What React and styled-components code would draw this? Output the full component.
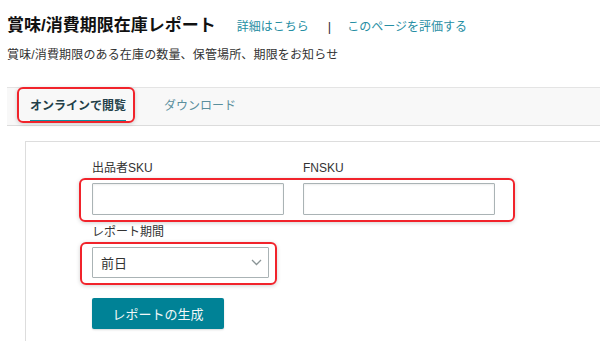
import React from "react";
import styled, { createGlobalStyle } from "styled-components";

const Global = createGlobalStyle`
  html, body { margin: 0; padding: 0; background: #fff; }
  body {
    font-family: "Liberation Sans", "Noto Sans CJK JP", sans-serif;
    color: #333;
    -webkit-font-smoothing: antialiased;
  }
  * { box-sizing: border-box; }
`;

const Page = styled.div`
  width: 600px;
  height: 341px;
  overflow: hidden;
  padding: 14px 0 0 7px;
`;

const Header = styled.div`
  display: flex;
  align-items: baseline;
  height: 24px;
`;

const Title = styled.h1`
  margin: 0;
  font-size: 17px;
  line-height: 24px;
  font-weight: 700;
  color: #111;
`;

const HeaderLink = styled.a`
  font-size: 12px;
  color: #268ea3;
  text-decoration: none;
  margin-left: ${(p) => p.$gap}px;
`;

const Divider = styled.span`
  font-size: 13px;
  color: #333;
  margin-left: 19px;
`;

const Subtitle = styled.p`
  margin: 8px 0 0;
  font-size: 12px;
  letter-spacing: 0.15px;
  line-height: 18px;
  color: #333;
`;

const TabBar = styled.div`
  margin-top: 23px;
  height: 39px;
  background: #f8f8f8;
  border-top: 1px solid #e4e4e4;
  border-bottom: 1px solid #dcdcdc;
  display: flex;
  align-items: flex-start;
  padding-left: 23px;
  gap: 38px;
`;

const Tab = styled.div`
  position: relative;
  font-size: 12px;
  line-height: 16px;
  padding: 10px 0 6px;
  font-weight: ${(p) => (p.$active ? 700 : 400)};
  color: ${(p) => (p.$active ? "#233f48" : "#5b8f9d")};
  border-bottom: 2px solid ${(p) => (p.$active ? "#0e8ea0" : "transparent")};
`;

const Highlight = styled.span`
  position: absolute;
  top: ${(p) => p.$t}px;
  left: ${(p) => p.$l}px;
  right: ${(p) => p.$r}px;
  bottom: ${(p) => p.$b}px;
  border: 2px solid #f1232b;
  border-radius: 6px;
  box-shadow: 0 1px 4px rgba(0, 0, 0, 0.18);
  pointer-events: none;
`;

const Card = styled.div`
  margin: 15px 0 0 18px;
  border-top: 1px solid #dddddd;
  border-left: 1px solid #dddddd;
  padding: 18px 0 20px 66px;
  min-height: 220px;
`;

const LabelRow = styled.div`
  display: flex;
  gap: 19px;
`;

const Label = styled.label`
  display: block;
  width: ${(p) => p.$w || 192}px;
  font-size: 12px;
  line-height: 16px;
  color: #333;
  margin-bottom: 7px;
`;

const Group = styled.div`
  position: relative;
  display: flex;
  gap: 19px;
  width: max-content;
`;

const Input = styled.input`
  width: 192px;
  height: 32px;
  border: 1px solid #aab3b5;
  box-shadow: inset 0 1px 2px rgba(0, 0, 0, 0.08);
  border-radius: 1px;
  padding: 0 8px;
  font-size: 13px;
  outline: none;
  background: #fff;
`;

const Section = styled.div`
  margin-top: 9px;
`;

const Select = styled.div`
  width: 177px;
  height: 31px;
  border: 1px solid #aab3b5;
  border-radius: 1px;
  display: flex;
  align-items: center;
  justify-content: space-between;
  padding: 0 6px 0 8px;
  font-size: 13px;
  color: #333;
  background: #fff;
`;

const Button = styled.button`
  margin-top: 20px;
  width: 132px;
  height: 31px;
  background: #008296;
  border: none;
  border-radius: 2px;
  color: #f2f7f8;
  font-family: inherit;
  font-size: 13px;
  box-shadow: 0 1px 2px rgba(0, 0, 0, 0.15);
  cursor: pointer;
`;

const Chevron = () => (
  <svg width="11" height="7" viewBox="0 0 11 7" fill="none">
    <path d="M1 1l4.5 4.5L10 1" stroke="#8a9496" strokeWidth="1.3" />
  </svg>
);

export default function App() {
  return (
    <>
      <Global />
      <Page>
        <Header>
          <Title>賞味/消費期限在庫レポート</Title>
          <HeaderLink href="#" $gap={21}>詳細はこちら</HeaderLink>
          <Divider>|</Divider>
          <HeaderLink href="#" $gap={16}>このページを評価する</HeaderLink>
        </Header>
        <Subtitle>賞味/消費期限のある在庫の数量、保管場所、期限をお知らせ</Subtitle>
        <TabBar>
          <Tab $active>
            オンラインで閲覧
            <Highlight $t={-1} $l={-13} $r={-9} $b={-3} />
          </Tab>
          <Tab>ダウンロード</Tab>
        </TabBar>
        <Card>
          <LabelRow>
            <Label htmlFor="sku">出品者SKU</Label>
            <Label htmlFor="fnsku">FNSKU</Label>
          </LabelRow>
          <Group>
            <Input id="sku" />
            <Input id="fnsku" />
            <Highlight $t={-5} $l={-13} $r={-20} $b={-7} />
          </Group>
          <Section>
            <Label $w={177}>レポート期間</Label>
            <Group>
              <Select>
                <span>前日</span>
                <Chevron />
              </Select>
              <Highlight $t={-5} $l={-12} $r={-8} $b={-7} />
            </Group>
          </Section>
          <Button>レポートの生成</Button>
        </Card>
      </Page>
    </>
  );
}
